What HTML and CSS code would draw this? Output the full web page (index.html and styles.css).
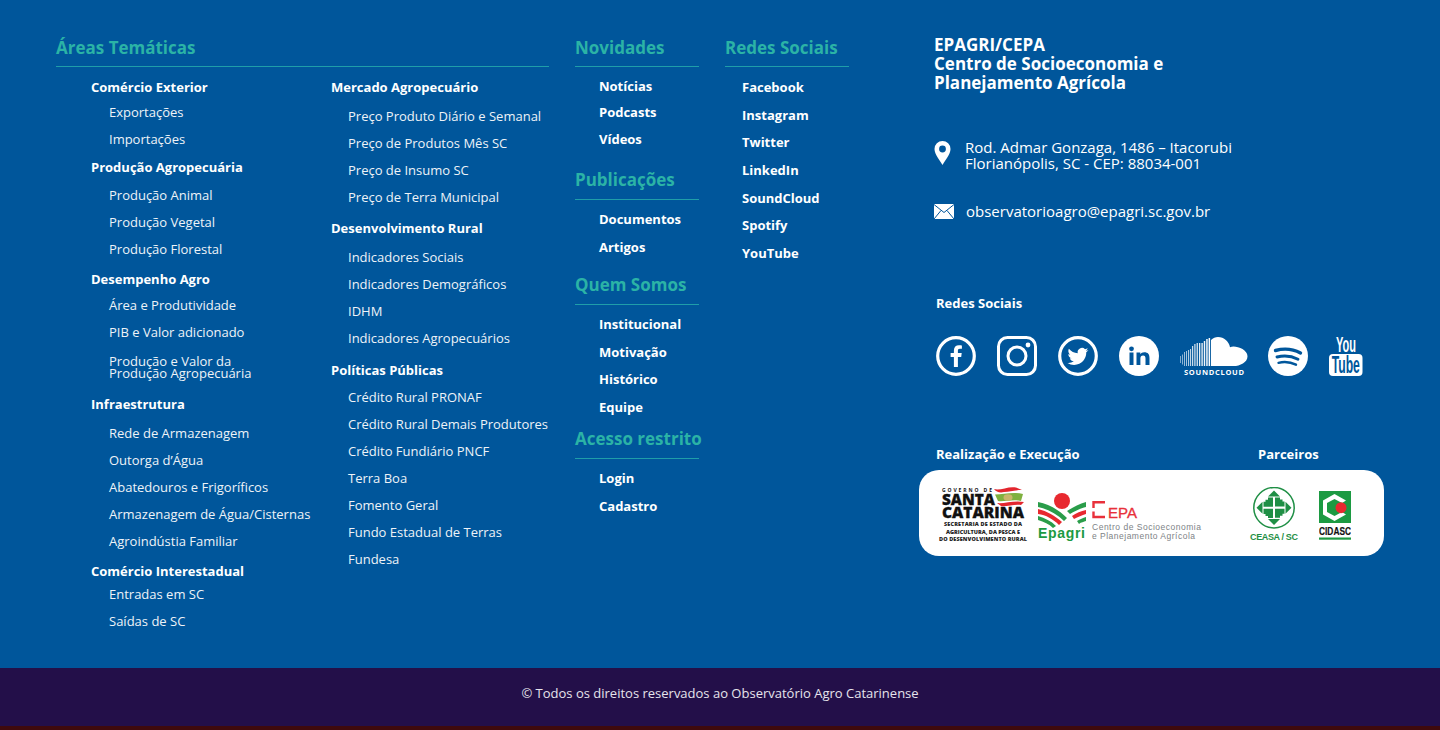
FILE: index.html
```html
<!DOCTYPE html>
<html lang="pt-BR">
<head>
    <meta charset="UTF-8">
    <meta name="viewport" content="width=device-width, initial-scale=1.0">
    <title>Observatório Agro Catarinense</title>
    <link rel="stylesheet" href="styles.css">
</head>
<body>
    <footer class="footer">
        <div class="footer-main">

            <!-- Áreas temáticas -->
            <section class="col-areas">
                <h2 class="col-title">Áreas Temáticas</h2>
                <div class="areas-columns">
                    <div class="areas-left">
                        <div class="group g1">
                            <h3>Comércio Exterior</h3>
                            <ul>
                                <li>Exportações</li>
                                <li>Importações</li>
                            </ul>
                        </div>
                        <div class="group g2">
                            <h3>Produção Agropecuária</h3>
                            <ul>
                                <li>Produção Animal</li>
                                <li>Produção Vegetal</li>
                                <li>Produção Florestal</li>
                            </ul>
                        </div>
                        <div class="group g3">
                            <h3>Desempenho Agro</h3>
                            <ul>
                                <li>Área e Produtividade</li>
                                <li>PIB e Valor adicionado</li>
                                <li class="two-lines">Produção e Valor da<br>Produção Agropecuária</li>
                            </ul>
                        </div>
                        <div class="group g4">
                            <h3>Infraestrutura</h3>
                            <ul>
                                <li>Rede de Armazenagem</li>
                                <li>Outorga d’Água</li>
                                <li>Abatedouros e Frigoríficos</li>
                                <li>Armazenagem de Água/Cisternas</li>
                                <li>Agroindústia Familiar</li>
                            </ul>
                        </div>
                        <div class="group g5">
                            <h3>Comércio Interestadual</h3>
                            <ul>
                                <li>Entradas em SC</li>
                                <li>Saídas de SC</li>
                            </ul>
                        </div>
                    </div>
                    <div class="areas-right">
                        <div class="group g6">
                            <h3>Mercado Agropecuário</h3>
                            <ul>
                                <li>Preço Produto Diário e Semanal</li>
                                <li>Preço de Produtos Mês SC</li>
                                <li>Preço de Insumo SC</li>
                                <li>Preço de Terra Municipal</li>
                            </ul>
                        </div>
                        <div class="group g7">
                            <h3>Desenvolvimento Rural</h3>
                            <ul>
                                <li>Indicadores Sociais</li>
                                <li>Indicadores Demográficos</li>
                                <li>IDHM</li>
                                <li>Indicadores Agropecuários</li>
                            </ul>
                        </div>
                        <div class="group g8">
                            <h3>Políticas Públicas</h3>
                            <ul>
                                <li>Crédito Rural PRONAF</li>
                                <li>Crédito Rural Demais Produtores</li>
                                <li>Crédito Fundiário PNCF</li>
                                <li>Terra Boa</li>
                                <li>Fomento Geral</li>
                                <li>Fundo Estadual de Terras</li>
                                <li>Fundesa</li>
                            </ul>
                        </div>
                    </div>
                </div>
            </section>

            <!-- Novidades, publicações etc -->
            <section class="col-links">
                <h2 class="col-title">Novidades</h2>
                <ul class="bold-links list-news">
                    <li>Notícias</li>
                    <li>Podcasts</li>
                    <li>Vídeos</li>
                </ul>
                <h2 class="col-title next-pub">Publicações</h2>
                <ul class="bold-links">
                    <li>Documentos</li>
                    <li>Artigos</li>
                </ul>
                <h2 class="col-title next-quem">Quem Somos</h2>
                <ul class="bold-links list-about">
                    <li>Institucional</li>
                    <li>Motivação</li>
                    <li>Histórico</li>
                    <li>Equipe</li>
                </ul>
                <h2 class="col-title next-acesso">Acesso restrito</h2>
                <ul class="bold-links">
                    <li>Login</li>
                    <li>Cadastro</li>
                </ul>
            </section>

            <section class="col-social">
                <h2 class="col-title">Redes Sociais</h2>
                <ul class="social-links">
                    <li>Facebook</li>
                    <li>Instagram</li>
                    <li>Twitter</li>
                    <li>LinkedIn</li>
                    <li>SoundCloud</li>
                    <li>Spotify</li>
                    <li>YouTube</li>
                </ul>
            </section>

            <!-- Contato e logos -->
            <section class="col-contact">
                <h2 class="org-name">EPAGRI/CEPA<br>Centro de Socioeconomia e<br>Planejamento Agrícola</h2>

                <div class="contact-row address">
                    <svg class="icon-pin" width="17" height="24" viewBox="0 0 16 24">
                        <path fill="#fff" fill-rule="evenodd" d="M8 0a8 8 0 0 1 8 8c0 5-5 11-8 16C5 19 0 13 0 8a8 8 0 0 1 8-8zm0 4.600a3.400 3.400 0 1 0 0 6.800 3.400 3.400 0 0 0 0-6.800z"/>
                    </svg>
                    <p>Rod. Admar Gonzaga, 1486 – Itacorubi<br>Florianópolis, SC - CEP: 88034-001</p>
                </div>

                <div class="contact-row email">
                    <svg class="icon-mail" width="20" height="15" viewBox="0 0 20 15">
                        <rect width="20" height="15" fill="#fff"/>
                        <path fill="none" stroke="#00569b" d="M0 .5l10 8 10-8M0 15l7-8.500M20 15l-7-8.500"/>
                    </svg>
                    <p>observatorioagro@epagri.sc.gov.br</p>
                </div>

                <h4 class="small-title social-title">Redes Sociais</h4>
                <div class="social-icons">
                    <svg width="40" height="40" viewBox="0 0 40 40">
                        <circle cx="20" cy="20" r="18.300" fill="none" stroke="#fff" stroke-width="3.200"/>
                        <path fill="#fff" d="M21.900 31V21h3.300l.5-3.900h-3.800v-2.400c0-1.100.4-1.900 2-1.900h2v-3.400c-.4 0-1.600-.2-3-.2-3 0-5 1.800-5 5.100v2.800h-3.300V21h3.300v10z"/>
                    </svg>
                    <svg width="40" height="40" viewBox="0 0 40 40">
                        <rect x="1.500" y="1.500" width="37" height="37" rx="9" fill="none" stroke="#fff" stroke-width="3"/>
                        <circle cx="20" cy="20" r="9" fill="none" stroke="#fff" stroke-width="3"/>
                        <circle cx="31" cy="9" r="2.400" fill="#fff"/>
                    </svg>
                    <svg width="40" height="40" viewBox="0 0 40 40">
                        <circle cx="20" cy="20" r="18.300" fill="none" stroke="#fff" stroke-width="3.200"/>
                        <path transform="translate(9.500 10) scale(.87)" fill="#fff" d="M23.953 4.570a10 10 0 0 1-2.825.775 4.958 4.958 0 0 0 2.163-2.723c-.951.555-2.005.959-3.127 1.184a4.920 4.920 0 0 0-8.384 4.482C7.690 8.095 4.067 6.130 1.640 3.162a4.822 4.822 0 0 0-.666 2.475c0 1.710.870 3.213 2.188 4.096a4.904 4.904 0 0 1-2.228-.616v.060a4.923 4.923 0 0 0 3.946 4.827 4.996 4.996 0 0 1-2.212.085 4.936 4.936 0 0 0 4.604 3.417 9.867 9.867 0 0 1-6.102 2.105c-.390 0-.779-.023-1.170-.067a13.995 13.995 0 0 0 7.557 2.209c9.053 0 13.998-7.496 13.998-13.985 0-.210 0-.420-.015-.630A9.935 9.935 0 0 0 24 4.590z"/>
                    </svg>
                    <svg width="40" height="40" viewBox="0 0 40 40">
                        <circle cx="20" cy="20" r="20" fill="#fff"/>
                        <rect x="10.500" y="16.500" width="4" height="12.500" fill="#00569b"/>
                        <circle cx="12.500" cy="12.800" r="2.400" fill="#00569b"/>
                        <path fill="#00569b" d="M17.500 16.500h3.800v1.700c.7-1.200 2.200-2 3.900-2 3.800 0 5.300 2.100 5.300 5.700V29h-4v-6.600c0-2-.6-3-2.400-3-1.900 0-2.700 1.200-2.700 3.100V29h-3.900z"/>
                    </svg>
                    <svg class="icon-soundcloud" width="68" height="40" viewBox="0 0 68 40">
                        <g fill="#fff">
                            <rect x="0" y="20" width="1" height="7" opacity=".5"/>
                            <rect x="2" y="18.500" width="1" height="10" opacity=".55"/>
                            <rect x="4" y="16" width="1" height="14" opacity=".6"/>
                            <rect x="6" y="15" width="1" height="15" opacity=".65"/>
                            <rect x="8" y="14" width="1.100" height="16" opacity=".7"/>
                            <rect x="10" y="13" width="1.100" height="17" opacity=".75"/>
                            <rect x="12" y="10" width="1.200" height="20" opacity=".8"/>
                            <rect x="14.300" y="8" width="1.200" height="22" opacity=".85"/>
                            <rect x="16.600" y="7" width="1.300" height="23" opacity=".85"/>
                            <rect x="19" y="7" width="1.300" height="23" opacity=".9"/>
                            <rect x="21.400" y="7" width="1.400" height="23" opacity=".9"/>
                            <rect x="23.800" y="5" width="1.400" height="25" opacity=".95"/>
                            <rect x="26.200" y="3" width="1.500" height="27" opacity=".95"/>
                            <rect x="28.600" y="2" width="1.500" height="28"/>
                            <path d="M31 30V4c2-2 4.500-3 7-3 6 0 11 4.500 12 10.200 1-.5 2.300-.8 3.500-.8 5.500 0 14 3.600 14 9.800S60 30 53.500 30z"/>
                        </g>
                        <text class="sc-label" x="34" y="39" text-anchor="middle" textLength="60">SOUNDCLOUD</text>
                    </svg>
                    <svg width="40" height="40" viewBox="0 0 40 40">
                        <circle cx="20" cy="20" r="20" fill="#fff"/>
                        <g fill="none" stroke="#00569b" stroke-linecap="round">
                            <path stroke-width="3.400" d="M7.500 14.500c8-2.200 17.500-1.500 25 2.500"/>
                            <path stroke-width="2.900" d="M9 21c7-1.800 14.500-1.100 21 2.200"/>
                            <path stroke-width="2.400" d="M10.500 26.800c6-1.400 12-.8 17.500 1.900"/>
                        </g>
                    </svg>
                    <svg width="34" height="40" viewBox="0 0 34 40">
                        <text class="yt-you" transform="translate(17 16) scale(.5 1)" text-anchor="middle">You</text>
                        <rect y="18" width="33.500" height="22" rx="4" fill="#fff"/>
                        <text class="yt-tube" transform="translate(16.800 37) scale(.53 1)" text-anchor="middle">Tube</text>
                    </svg>
                </div>

                <div class="partners-titles">
                    <h4 class="small-title">Realização e Execução</h4>
                    <h4 class="small-title">Parceiros</h4>
                </div>

                <div class="logos-card">
                    <!-- Governo de SC -->
                    <svg class="logo-sc" width="90" height="56" viewBox="0 0 90 56">
                        <text class="sc-gov" x="4" y="5" textLength="50">GOVERNO DE</text>
                        <text class="sc-big" x="4" y="17.500" textLength="53" lengthAdjust="spacingAndGlyphs">SANTA</text>
                        <text class="sc-big" x="4" y="31" textLength="82" lengthAdjust="spacingAndGlyphs">CATARINA</text>
                        <text class="sc-small" x="45" y="39" text-anchor="middle" textLength="78">SECRETARIA DE ESTADO DA</text>
                        <text class="sc-small" x="45" y="46.500" text-anchor="middle" textLength="74">AGRICULTURA, DA PESCA E</text>
                        <text class="sc-small" x="45" y="54" text-anchor="middle" textLength="88">DO DESENVOLVIMENTO RURAL</text>
                        <path fill="#e3262e" d="M56 2c6 2 14-3 22-1.500L84 3c-8 0-12 2-18 2-4 1-8 0-10-3zM59 16c7 1 17-3 27-1l-3 3c-7-1-15 2-20 1z"/>
                        <path fill="#7fb13f" d="M57 7.500c8 0 18-3 28-.5l-2 7c-8-2-17 1-23 0z"/>
                        <ellipse cx="70" cy="10.500" rx="4.500" ry="3.200" fill="#c9b66a"/>
                    </svg>

                    <!-- Epagri / CEPA -->
                    <svg class="logo-epagri" width="165" height="56" viewBox="0 0 165 56">
                        <circle cx="25" cy="14" r="8" fill="#e8292f"/>
                        <path fill="#2a9d4a" d="M1 15c11 2 21 8 29 16l-3 3c-7-7-16-12-26-14z"/>
                        <path fill="#e8292f" d="M1 22c9 2 17 7 24 13l-3 3c-6-6-13-10-21-11z"/>
                        <path fill="#2a9d4a" d="M1 29c7 2 13 5 18 10l-3 2c-4-4-9-6-15-8z"/>
                        <path fill="#2a9d4a" d="M49 15c-7 2-14 6-19 9l3 3c5-3 11-6 16-7z"/>
                        <path fill="#e8292f" d="M49 23c-5 1-10 3-14 6l2 3c4-2 8-4 12-5z"/>
                        <path fill="#2a9d4a" d="M49 30c-3 1-6 2-9 4l2 3c2-2 5-2 7-3z"/>
                        <text class="ep-name" x="1" y="50.500" textLength="47">Epagri</text>
                        <path fill="none" stroke="#e8303a" stroke-width="2.400" d="M68 15.200H56.500V21M56.500 24.500V30H68"/>
                        <text class="cepa-name" x="71" y="31" textLength="29" lengthAdjust="spacingAndGlyphs">EPA</text>
                        <text class="cepa-text" x="55" y="43" textLength="109">Centro de Socioeconomia</text>
                        <text class="cepa-text" x="55" y="51.500" textLength="103">e Planejamento Agrícola</text>
                    </svg>

                    <!-- CEASA -->
                    <svg class="logo-ceasa" width="50" height="56" viewBox="0 0 50 56">
                        <circle cx="25" cy="20.700" r="20.200" fill="none" stroke="#1f8f45" stroke-width="1.500"/>
                        <g fill="#1f8f45">
                            <path d="M25 3.500l6 6H19zM25 38l6-6H19zM7.500 20.700l6-6v12zM42.500 20.700l-6-6v12z"/>
                            <path d="M19 10.500h5v9.200h-9.500v-5h2v-2h2.500zM26 10.500h5v2h2.500v2h2v5H26zM14.500 21.700H24v9.200h-5v-2h-2.500v-2h-2zM26 21.700h9.500v5h-2v2H31v2h-5z"/>
                        </g>
                        <text class="ceasa-name" x="25" y="53" text-anchor="middle" textLength="48">CEASA / SC</text>
                    </svg>

                    <!-- CIDASC -->
                    <svg class="logo-cidasc" width="32" height="52" viewBox="0 0 32 52">
                        <rect width="32" height="32" fill="#1c9a42"/>
                        <path fill="#fff" d="M15.500 3L27 9.500 23 12l-7.500-4L8 12v9l7.500 4 7.500-4 4 2.500L15.500 30 4 23.500v-14z"/>
                        <circle cx="22" cy="16.700" r="5.500" fill="#e8292f"/>
                        <text class="cidasc-name" transform="translate(16 44) scale(.76 1)" text-anchor="middle">CIDASC</text>
                        <rect y="46.500" width="32" height="2.200" fill="#1c9a42"/>
                    </svg>
                </div>
            </section>
        </div>

        <div class="copyright">© Todos os direitos reservados ao Observatório Agro Catarinense</div>
        <div class="bottom-strip"></div>
    </footer>
</body>
</html>
```

FILE: styles.css
```css
* {
    box-sizing: border-box;
}

html, body {
    margin: 0;
    padding: 0;
}

body {
    font-family: "Open Sans", "Liberation Sans", sans-serif;
    color: #fff;
    background-color: #00569b;
    height: 730px;
    overflow: hidden;
}

ul {
    list-style: none;
    margin: 0;
    padding: 0;
}

h2, h3, h4, p {
    margin: 0;
}

.footer-main {
    display: flex;
    height: 668px;
    padding: 36px 0 0 56px;
}

/* titulos das colunas */
.col-title {
    height: 31px;
    font-size: 17px;
    line-height: 24px;
    font-weight: 700;
    color: #2bb3a6;
    border-bottom: 1px solid #1f9ea9;
    white-space: nowrap;
}

.col-areas {
    width: 493px;
}

.areas-columns {
    display: flex;
}

.areas-left {
    width: 275px;
    padding-left: 35px;
}

.areas-right {
    padding-top: 10px;
}

.group h3 {
    font-size: 13px;
    line-height: 20px;
    font-weight: 700;
}

.group li {
    height: 27px;
    padding-left: 18px;
    font-size: 13px;
    line-height: 27px;
    color: #eef3f8;
}

.group li.two-lines {
    height: 43px;
    padding-top: 9.5px;
    line-height: 12px;
}

.areas-right .group li {
    padding-left: 17px;
    white-space: nowrap;
}

.g1 { margin-top: 10px; }
.g1 h3 { margin-bottom: 1.5px; }
.g2 { margin-top: 4.5px; }
.g2 h3 { margin-bottom: 4.5px; }
.g3 { margin-top: 6.5px; }
.g3 h3 { margin-bottom: 2.5px; }
.g4 { margin-top: 5.5px; }
.g4 h3 { margin-bottom: 5.5px; }
.g5 { margin-top: 6.5px; }
.g5 h3 { margin-bottom: -0.5px; }
.g6 h3 { margin-bottom: 5.5px; }
.g7 { margin-top: 7.5px; }
.g7 h3 { margin-bottom: 5.5px; }
.g8 { margin-top: 8.5px; }
.g8 h3 { margin-bottom: 3.5px; }

.col-links {
    width: 124px;
    margin-left: 26px;
}

.bold-links {
    padding: 5px 0 0 24px;
}

.bold-links li {
    height: 28px;
    font-size: 13px;
    line-height: 28px;
    font-weight: 700;
}

.list-news {
    padding-top: 6px;
}

.list-news li {
    height: 26.4px;
    line-height: 26.4px;
}

.list-about {
    padding-top: 6px;
}

.list-about li {
    height: 27.5px;
    line-height: 27.5px;
}

.next-pub,
.next-quem,
.next-acesso {
    height: 32px;
}

.next-pub { margin-top: 16.3px; }
.next-quem { margin-top: 12px; }
.next-acesso { margin-top: 5.8px; }

.col-social {
    width: 124px;
    margin-left: 26px;
}

.social-links {
    padding: 7px 0 0 17px;
}

.social-links li {
    height: 27.7px;
    font-size: 13px;
    line-height: 27.7px;
    font-weight: 700;
}

/* coluna de contato */
.col-contact {
    width: 465px;
    margin-left: 70px;
}

.org-name {
    margin-top: -1px;
    padding-left: 15px;
    font-size: 17px;
    line-height: 19px;
    font-weight: 700;
}

.contact-row {
    display: flex;
    align-items: flex-start;
    padding-left: 15px;
    font-size: 15px;
    line-height: 17px;
}

.address {
    margin-top: 46.5px;
    line-height: 16px;
}

.address svg {
    margin: 2px 14px 0 0;
    flex-shrink: 0;
}

.email {
    margin-top: 32.5px;
    align-items: center;
}

.email svg {
    margin-right: 12px;
    flex-shrink: 0;
}

.small-title {
    font-size: 13px;
    line-height: 18px;
    font-weight: 700;
}

.social-title {
    margin: 74px 0 0 17px;
}

.social-icons {
    display: flex;
    gap: 21px;
    margin: 24px 0 0 17px;
}

.social-icons svg {
    display: block;
    overflow: visible;
}

.icon-soundcloud {
    margin-right: -1px;
}

.sc-label {
    font-family: "Open Sans", sans-serif;
    font-size: 7.500px;
    font-weight: 700;
    fill: #fff;
}

.yt-you {
    font-family: "Liberation Sans", sans-serif;
    font-size: 22px;
    font-weight: 700;
    fill: #fff;
}

.yt-tube {
    font-family: "Liberation Sans", sans-serif;
    font-size: 23px;
    font-weight: 700;
    fill: #00569b;
}

.partners-titles {
    display: flex;
    margin: 69px 0 0 17px;
}

.partners-titles h4:first-child {
    width: 322px;
}

.logos-card {
    display: flex;
    align-items: flex-start;
    width: 465px;
    height: 86px;
    margin-top: 7px;
    padding: 17px 0 0 19px;
    background-color: #fff;
    border-radius: 20px;
}

.logos-card svg {
    display: block;
    flex-shrink: 0;
}

.logo-epagri {
    margin-left: 9px;
}

.logo-ceasa {
    margin-left: 47px;
}

.logo-cidasc {
    margin: 4px 0 0 20px;
}

.sc-gov {
    font-family: "Open Sans", sans-serif;
    font-size: 5px;
    font-weight: 700;
    fill: #111;
}

.sc-big {
    font-family: "Open Sans", sans-serif;
    font-size: 15px;
    font-weight: 800;
    fill: #111;
    stroke: #111;
    stroke-width: .3px;
}

.sc-small {
    font-family: "Open Sans", sans-serif;
    font-size: 5.500px;
    font-weight: 800;
    fill: #222;
}

.ep-name {
    font-family: "Liberation Sans", sans-serif;
    font-size: 14px;
    font-weight: 700;
    fill: #1c9a42;
}

.cepa-name {
    font-family: "Liberation Sans", sans-serif;
    font-size: 14px;
    fill: #e8303a;
    stroke: #e8303a;
    stroke-width: .3px;
}

.cepa-text {
    font-family: "Liberation Sans", sans-serif;
    font-size: 8.500px;
    fill: #7d8286;
}

.ceasa-name {
    font-family: "Liberation Sans", sans-serif;
    font-size: 9px;
    font-weight: 700;
    fill: #1f8f45;
}

.cidasc-name {
    font-family: "Liberation Sans", sans-serif;
    font-size: 11px;
    font-weight: 700;
    fill: #111;
    stroke: #111;
    stroke-width: .2px;
}

.copyright {
    height: 58px;
    background-color: #230f49;
    font-size: 13px;
    line-height: 51px;
    text-align: center;
    color: #e6e4ec;
}

.bottom-strip {
    height: 4px;
    background-color: #3f0a0d;
}
```
